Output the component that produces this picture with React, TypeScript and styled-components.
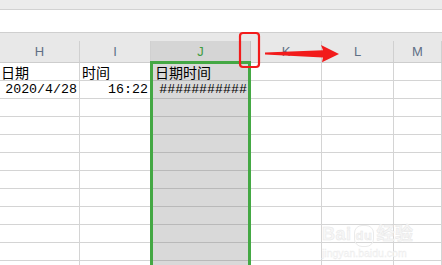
import React from 'react'
import styled, { createGlobalStyle } from 'styled-components'

const GlobalStyle = createGlobalStyle`
  * { box-sizing: border-box; }
  html, body { margin: 0; padding: 0; background: #fff; overflow: hidden; }
`

const COLS = '80px 71px 100px 71px 72px 1fr'
const letters = ['H', 'I', 'J', 'K', 'L', 'M']

const rows: string[][] = [
  ['日期', '时间', '日期时间', '', '', ''],
  ['2020/4/28', '16:22', '###########', '', '', ''],
  ...Array.from({ length: 10 }, () => ['', '', '', '', '', '']),
]

export default function App() {
  return (
    <Screen>
      <GlobalStyle />
      <TopStrip />
      <FormulaBar />
      <HeaderRow>
        {letters.map((l, i) => (
          <HeaderCell key={l} $active={i === 2}>
            {l}
          </HeaderCell>
        ))}
      </HeaderRow>
      <Sheet>
        {rows.map((r, ri) => (
          <Row key={ri}>
            {r.map((v, ci) => (
              <Cell
                key={ci}
                $selected={ci === 2}
                $mono={ri === 1}
                $right={ri === 1}
              >
                {v}
              </Cell>
            ))}
          </Row>
        ))}
        <Selection />
      </Sheet>
      <Watermark>
        <Brand>
          Bai<Paw>du</Paw>经验
        </Brand>
        <Site>jingyan.baidu.com</Site>
      </Watermark>
      <Annotation width="442" height="265" viewBox="0 0 442 265">
        <rect x="240" y="33" width="19" height="34" rx="3" fill="none" stroke="#f21b1b" strokeWidth="2.2" />
        <path d="M265 52.6 L323 50.2 L321 45 L339 54 L322 62.2 L323 57.4 L265 54.6 Z" fill="#f21b1b" />
      </Annotation>
    </Screen>
  )
}

const Screen = styled.div`
  position: relative;
  width: 442px;
  height: 265px;
  overflow: hidden;
  display: flex;
  flex-direction: column;
  font-family: 'Liberation Sans', 'Noto Sans CJK SC', sans-serif;
`

const TopStrip = styled.div`
  height: 10px;
  flex: none;
  background: #ececec;
  border-bottom: 1px solid #d2d2d2;
`

const FormulaBar = styled.div`
  height: 23px;
  flex: none;
  background: #fff;
  border-bottom: 1px solid #cfcfcf;
`

const HeaderRow = styled.div`
  flex: none;
  height: 30px;
  padding-top: 8px;
  display: grid;
  grid-template-columns: ${COLS};
  background: #e8e8e8;
  border-bottom: 1px solid #cdcdcd;
`

const HeaderCell = styled.div<{ $active: boolean }>`
  display: flex;
  align-items: center;
  justify-content: center;
  height: 21px;
  border-right: 1px solid ${p => (p.$active ? '#c4c4c4' : '#d0d0d0')};
  background: ${p => (p.$active ? '#d5d5d5' : 'transparent')};
  color: ${p => (p.$active ? '#3f9c3f' : '#5f6f86')};
  font-size: 13px;
`

const Sheet = styled.div`
  position: relative;
  flex: 1;
`

const Row = styled.div`
  display: grid;
  grid-template-columns: ${COLS};
  height: 18px;
`

const Cell = styled.div<{ $selected: boolean; $mono: boolean; $right: boolean }>`
  display: flex;
  align-items: center;
  justify-content: ${p => (p.$right ? 'flex-end' : 'flex-start')};
  min-width: 0;
  padding: ${p => (p.$right ? '0 2px 0 0' : '0 0 0 1px')};
  border-right: 1px solid ${p => (p.$selected ? '#c0c0c0' : '#d4d4d4')};
  border-bottom: 1px solid ${p => (p.$selected ? '#b9b9b9' : '#d4d4d4')};
  background: ${p => (p.$selected ? '#d9d9d9' : '#fff')};
  color: #000;
  white-space: nowrap;
  font-family: ${p =>
    p.$mono
      ? "'Liberation Mono', 'Noto Sans CJK SC', monospace"
      : "'Noto Sans CJK SC', sans-serif"};
  font-size: ${p => (p.$mono ? '13.3px' : '14px')};
  line-height: 1;

  &:nth-child(2) {
    padding-left: 2px;
  }
  &:nth-child(3) {
    padding-left: ${p => (p.$right ? '0' : '4px')};
    padding-right: ${p => (p.$right ? '3px' : '0')};
  }
`

const Selection = styled.div`
  position: absolute;
  left: 150px;
  top: -2px;
  width: 101px;
  bottom: -10px;
  border: 3px solid #44a844;
  pointer-events: none;
`

const Watermark = styled.div`
  position: absolute;
  left: 322px;
  top: 224px;
  display: flex;
  flex-direction: column;
  color: #f7f7f7;
  -webkit-text-stroke: 0.5px #e8e8e8;
  pointer-events: none;
`

const Brand = styled.div`
  font-family: 'Liberation Sans', 'Noto Sans CJK SC', sans-serif;
  font-weight: bold;
  font-size: 18px;
  line-height: 20px;
  letter-spacing: 0.5px;
`

const Paw = styled.span`
  display: inline-block;
  margin: 0 2px;
  padding: 0 1px;
  border-radius: 8px;
  border: 1px solid #ebebeb;
  font-size: 13px;
`

const Site = styled.div`
  font-family: 'Liberation Sans', sans-serif;
  font-size: 10.5px;
  line-height: 12px;
  -webkit-text-stroke: 0.3px #ebebeb;
`

const Annotation = styled.svg`
  position: absolute;
  left: 0;
  top: 0;
  pointer-events: none;
`
